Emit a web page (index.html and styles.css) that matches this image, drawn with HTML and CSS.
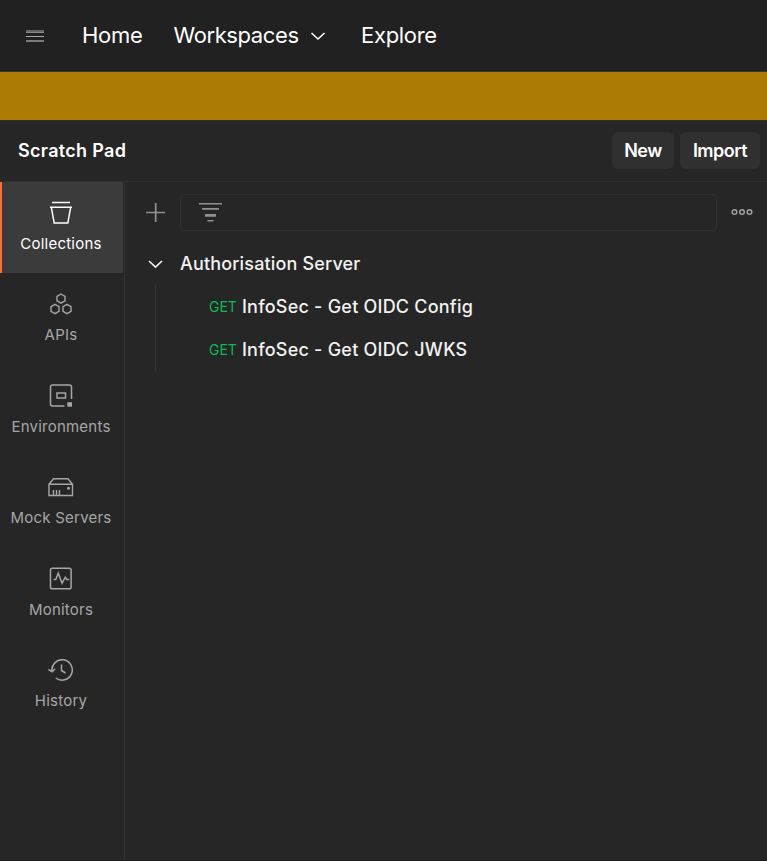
FILE: index.html
```html
<!DOCTYPE html>
<html lang="en">
<head>
<meta charset="utf-8">
<title>Scratch Pad</title>
<link rel="stylesheet" href="styles.css">
</head>
<body>
<div class="app">
  <nav class="topbar">
    <svg class="menu" width="18" height="12" viewBox="0 0 18 12"><path d="M0 0h18v2H0z" fill="#666"/><path d="M0 2h18v1H0z" fill="#888"/><path d="M0 6h18v1H0z" fill="#aaa"/><path d="M0 10h18v2H0z" fill="#7b7b7b"/></svg>
    <span class="home">Home</span>
    <span class="workspaces">Workspaces</span>
    <svg class="nav-chevron" width="16" height="10" viewBox="0 0 16 10"><path d="M1.500 2 8 8 14.500 2" fill="none" stroke="#fff" stroke-width="1.500"/></svg>
    <span class="explore">Explore</span>
  </nav>
  <div class="banner"></div>
  <header class="header">
    <h1 class="title">Scratch Pad</h1>
    <button class="btn btn-new">New</button>
    <button class="btn btn-import">Import</button>
  </header>
  <div class="main">
    <aside class="sidebar">
      <div class="tab active">
        <svg width="26" height="26" viewBox="0 0 26 26" fill="none" stroke="currentColor" stroke-width="1.500"><path d="M4 2.500h18M2 7.200h22M3.300 7.200l2.900 15.900h13.600l2.900-15.900"/></svg>
        <span>Collections</span>
      </div>
      <div class="tab">
        <svg width="26" height="26" viewBox="0 0 26 26" fill="none" stroke="currentColor" stroke-width="1.400"><path d="m13 3 4 2.300v4.600l-4 2.300-4-2.300V5.300zM7 13.400l4 2.300v4.600l-4 2.300-4-2.300v-4.600zM19 13.400l4 2.300v4.600l-4 2.300-4-2.300v-4.600z"/></svg>
        <span>APIs</span>
      </div>
      <div class="tab">
        <svg width="26" height="26" viewBox="0 0 26 26" fill="none" stroke="currentColor" stroke-width="1.500"><path d="M16.500 23H4.500a2 2 0 0 1-2-2V4a2 2 0 0 1 2-2h17a2 2 0 0 1 2 2v12"/><path d="M9 10h8.500v5H9z"/><path d="M19.300 19.200h4.700v4.500h-4.700z" fill="currentColor" stroke="none"/></svg>
        <span>Environments</span>
      </div>
      <div class="tab">
        <svg width="26" height="26" viewBox="0 0 26 26" fill="none" stroke="currentColor" stroke-width="1.400"><path d="M1 10.300h23.500v11.200H1zM1 10.300l4.500-5.600H20l4.500 5.600M5.500 16v5M8.500 16v5M11.500 16v5"/><circle cx="20.500" cy="14.300" r="1.500" fill="currentColor" stroke="none"/></svg>
        <span>Mock Servers</span>
      </div>
      <div class="tab">
        <svg width="26" height="26" viewBox="0 0 26 26" fill="none" stroke="currentColor" stroke-width="1.500"><rect x="2.500" y="2.200" width="20.600" height="20.600" rx="1.800"/><path d="M5.500 13.500h2.300l2.400-6.300 3.900 10 3.200-6 1.500 2.300h2.400"/></svg>
        <span>Monitors</span>
      </div>
      <div class="tab">
        <svg width="26" height="26" viewBox="0 0 26 26" fill="none" stroke="currentColor" stroke-width="1.500"><path d="M4 14.500a10.200 10.200 0 1 1 3.800 6.500M.400 12.500l3.800 2.300 2.900-3M13.500 7.500v6l4 2.500"/></svg>
        <span>History</span>
      </div>
    </aside>
    <section class="content">
      <div class="toolbar">
        <svg class="plus" width="20" height="20" viewBox="0 0 20 20"><path d="M0 10.500h19M9.700 1v19" stroke="#919191" stroke-width="1.700"/></svg>
        <div class="filter">
          <svg width="24" height="20" viewBox="0 0 24 20" fill="#919191"><path d="M0 1h23v1.600H0zM3 6h17v1.800H3zM6 12h11v2.800H6zM8.500 18h6v1.500h-6z"/></svg>
        </div>
        <svg class="more" width="22" height="8" viewBox="0 0 22 8" fill="none" stroke="#a0a0a0" stroke-width="1.500"><circle cx="3.500" cy="4" r="2.300"/><circle cx="11" cy="4" r="2.300"/><circle cx="18.500" cy="4" r="2.300"/></svg>
      </div>
      <div class="folder">
        <svg width="16" height="10" viewBox="0 0 16 10"><path d="M2 2 8.500 8.200 15 2" fill="none" stroke="#f2f2f2" stroke-width="1.600"/></svg>
        <span class="folder-name">Authorisation Server</span>
      </div>
      <div class="requests">
        <div class="request"><span class="method">GET</span><span>InfoSec - Get OIDC Config</span></div>
        <div class="request"><span class="method">GET</span><span>InfoSec - Get OIDC JWKS</span></div>
      </div>
    </section>
  </div>
</div>
</body>
</html>
```
FILE: styles.css
```css
* { box-sizing: border-box; }
body { margin: 0; background: #262626; color: #fff; font-family: Inter, "Liberation Sans", sans-serif; }
svg { display: block; flex: none; }
span { white-space: nowrap; }
.app { display: flex; flex-direction: column; height: 861px; overflow: hidden; border-bottom: 1px solid #1b1b1b; }
.topbar { display: flex; align-items: center; height: 72px; flex: none; padding-left: 26px; background: #212121; border-bottom: 1px solid #363636; font-size: 22px; line-height: 28px; }
.topbar span { padding-bottom: 2px; }
.home { width: 60px; margin-left: 38px; letter-spacing: -.3px; }
.workspaces { width: 126px; margin-left: 31.500px; letter-spacing: -.4px; }
.nav-chevron { margin-left: 10px; }
.explore { margin-left: 35.500px; letter-spacing: -.3px; }
.banner { height: 48px; flex: none; background: #ad7a03; }
.header { display: flex; align-items: center; height: 62px; flex: none; padding: 0 7px 1px 18px; border-top: 1px solid #303030; border-bottom: 1px solid #303030; }
.title { margin: 0 auto 0 0; font-size: 18px; font-weight: 600; line-height: 24px; letter-spacing: .32px; }
.btn { display: flex; align-items: center; justify-content: center; height: 37px; padding: 0; border: 0; border-radius: 6px; background: #303030; color: #fff; font: 600 18px/24px Inter, "Liberation Sans", sans-serif; letter-spacing: -.5px; }
.btn-new { width: 62px; margin-right: 6px; }
.btn-import { width: 80px; }
.main { display: flex; flex: 1; min-height: 0; }
.sidebar { width: 125px; flex: none; padding-right: 1px; border-right: 1px solid #333; }
.tab { display: flex; flex-direction: column; align-items: center; height: 91.400px; padding: 18px 2px 0 0; color: #a6a6a6; font-size: 15px; line-height: 20px; letter-spacing: .23px; }
.tab svg { margin-bottom: 8px; }
.tab span { padding-left: 1px; }
.active { background: #3b3b3b; color: #fff; box-shadow: inset 2px 0 #ff6c37; }
.content { flex: 1; min-width: 0; }
.toolbar { display: flex; align-items: center; height: 60px; padding: 0 14px 0 21px; }
.filter { display: flex; align-items: center; width: 537px; height: 37px; margin-left: 14px; padding-left: 18px; border: 1px solid #303030; border-radius: 4px; }
.more { margin-left: 14px; }
.folder { display: flex; align-items: center; height: 43px; padding-left: 22px; font-size: 18px; font-weight: 500; line-height: 24px; letter-spacing: .16px; color: #f2f2f2; }
.folder-name { margin-left: 17px; }
.requests { height: 86px; margin-left: 30px; border-left: 1px solid #363636; }
.request { display: flex; align-items: center; height: 43px; padding-left: 53px; font-size: 18px; font-weight: 500; line-height: 24px; letter-spacing: .22px; color: #f2f2f2; }
.method { width: 33px; font-size: 14px; font-weight: 400; letter-spacing: 0; color: #0cbb52; }
```
